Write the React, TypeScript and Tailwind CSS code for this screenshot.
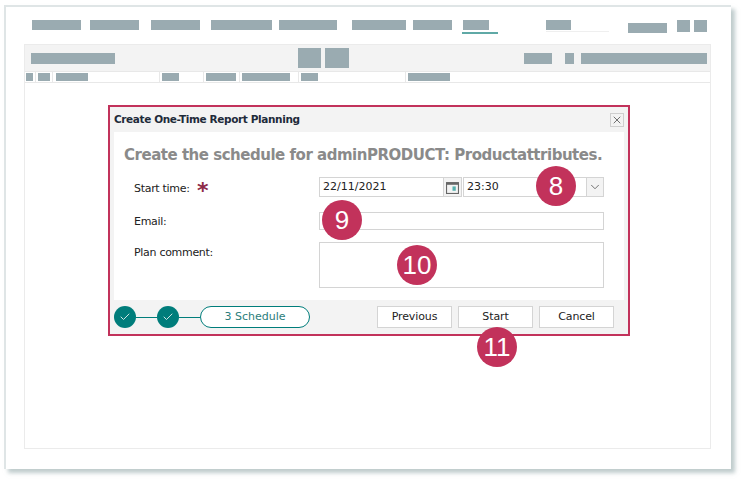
import React from 'react'
import { Check, ChevronDown, X } from 'lucide-react'

const Bar = ({ className }: { className: string }) => <div className={`bg-[#9aabb1] shrink-0 ${className}`} />

const Badge = ({ label, className }: { label: string; className: string }) => (
  <div className={`absolute w-10 h-10 rounded-full bg-[#c2325b] text-white flex items-center justify-center font-['Liberation_Sans',sans-serif] text-[26px] ${className}`}>
    {label}
  </div>
)

const Step = () => (
  <div className="w-[22px] h-[22px] rounded-full bg-[#007d7b] flex items-center justify-center shrink-0">
    <Check className="w-3 h-3 text-[#cfe5e4]" strokeWidth={2} />
  </div>
)

const FooterButton = ({ label }: { label: string }) => (
  <button className="w-[75px] h-[22px] bg-white border border-[#d4d4d4] text-[11px] tracking-[-0.1px] text-[#222] flex items-center justify-center">
    {label}
  </button>
)

export default function App() {
  return (
    <div className="relative w-[741px] h-[479px] overflow-hidden bg-white pt-[5px] pl-[4px] font-['DejaVu_Sans',sans-serif]">
      <div className="w-[727px] h-[464px] bg-white px-[18px] border-t-2 border-l-2 border-[#dfe5e6] shadow-[4px_4px_4px_rgba(150,170,172,0.6)]">
        {/* top nav */}
        <div className="flex h-[37px] pl-[8px] pt-[13px]">
          <Bar className="w-[49px] h-[10px]" />
          <Bar className="w-[49px] h-[10px] ml-[9px]" />
          <Bar className="w-[49px] h-[10px] ml-[12px]" />
          <Bar className="w-[61px] h-[10px] ml-[11px]" />
          <Bar className="w-[58px] h-[10px] ml-[7px]" />
          <Bar className="w-[54px] h-[10px] ml-[15px]" />
          <Bar className="w-[39px] h-[10px] ml-[7px]" />
          <div className="w-[36px] h-[14px] ml-[10px] pl-[1px] border-b-2 border-[#5fa9a6]">
            <Bar className="w-[26px] h-[10px]" />
          </div>
          <div className="w-[63px] h-[12px] ml-[48px] border-b border-[#efefef]">
            <Bar className="w-[25px] h-[10px]" />
          </div>
          <Bar className="w-[39px] h-[10px] ml-[19px] mt-[3px]" />
          <Bar className="w-[13px] h-[12px] ml-[10px]" />
          <Bar className="w-[13px] h-[12px] ml-[4px]" />
        </div>

        {/* panel */}
        <div className="w-[687px] h-[405px] border border-[#ebebeb]">
          <div className="flex items-center h-[27px] bg-[#f3f3f3] pl-[6px] border-b border-[#e8e8e8]">
            <Bar className="w-[84px] h-[11px]" />
            <Bar className="w-[23px] h-[20px] ml-[183px]" />
            <Bar className="w-[24px] h-[20px] ml-[4px]" />
            <Bar className="w-[28px] h-[11px] ml-[175px]" />
            <Bar className="w-[9px] h-[11px] ml-[13px]" />
            <Bar className="w-[126px] h-[11px] ml-[7px]" />
          </div>
          <div className="flex h-[11px] border-b border-[#e8e8e8] items-stretch">
            <div className="w-[11px] border-r border-[#e8e8e8] pl-[1px] pt-[1px]"><Bar className="w-[7px] h-[8px]" /></div>
            <div className="w-[17px] border-r border-[#e8e8e8] pl-[2px] pt-[1px]"><Bar className="w-[12px] h-[8px]" /></div>
            <div className="w-[107px] border-r border-[#e8e8e8] pl-[3px] pt-[1px]"><Bar className="w-[32px] h-[8px]" /></div>
            <div className="w-[44px] border-r border-[#e8e8e8] pl-[2px] pt-[1px]"><Bar className="w-[17px] h-[8px]" /></div>
            <div className="w-[36px] border-r border-[#e8e8e8] pl-[2px] pt-[1px]"><Bar className="w-[30px] h-[8px]" /></div>
            <div className="w-[59px] border-r border-[#e8e8e8] pl-[2px] pt-[1px]"><Bar className="w-[48px] h-[8px]" /></div>
            <div className="w-[107px] border-r border-[#e8e8e8] pl-[2px] pt-[1px]"><Bar className="w-[17px] h-[8px]" /></div>
            <div className="pl-[2px] pt-[1px]"><Bar className="w-[42px] h-[8px]" /></div>
          </div>

          {/* dialog */}
          <div className="w-[522px] h-[231px] ml-[83px] mt-[22px] border-2 border-[#c2325b] bg-[#f3f3f3] flex flex-col">
            <div className="h-[25px] flex items-center justify-between pl-[4px] pr-[4px] shrink-0">
              <span className="text-[10.5px] font-bold text-[#1e2b3a] tracking-[-0.38px] whitespace-nowrap">Create One-Time Report Planning</span>
              <div className="w-[14px] h-[14px] border border-[#cfcfcf] flex items-center justify-center">
                <X className="w-3 h-3 text-[#444]" strokeWidth={1.5} />
              </div>
            </div>
            <div className="mx-[4px] h-[168px] bg-white pl-[10px] pt-[12px] shrink-0">
              <div className="font-bold text-[15px] leading-[22px] text-[#8a8a8a] tracking-[-0.48px] whitespace-nowrap">
                Create the schedule for adminPRODUCT: Productattributes.
              </div>
              <div className="mt-[11px] flex items-center h-[20px]">
                <span className="w-[63px] ml-[10px] text-[11px] text-[#222] tracking-[-0.3px] pt-[4px]">Start time:</span>
                <span className="w-[122px] text-[22px] leading-[20px] font-bold text-[#8d2a47] pt-[7px]">*</span>
                <div className="w-[125px] h-[20px] border border-[#d4d4d4] text-[11px] text-[#222] pl-[3px] flex items-center">22/11/2021</div>
                <div className="w-[18px] h-[20px] border-y border-r border-[#d4d4d4] bg-[#f3f3f3] flex items-center justify-center">
                  <svg viewBox="0 0 12 12" className="w-[13px] h-[13px]">
                    <rect x="0.5" y="1.5" width="11" height="10" fill="none" stroke="#666" />
                    <rect x="0.5" y="1.5" width="11" height="2" fill="#666" />
                    <rect x="6" y="5" width="3" height="4" fill="#55b0ad" />
                  </svg>
                </div>
                <div className="w-[123px] h-[20px] ml-[1px] border-y border-l border-[#d4d4d4] text-[11px] text-[#222] pl-[3px] flex items-center">23:30</div>
                <div className="w-[18px] h-[20px] border border-[#d4d4d4] bg-[#f3f3f3] flex items-center justify-center">
                  <ChevronDown className="w-[14px] h-[14px] text-[#444]" strokeWidth={1.25} />
                </div>
              </div>
              <div className="mt-[15px] flex items-center h-[18px]">
                <span className="w-[185px] ml-[10px] text-[11px] text-[#222] tracking-[-0.3px] pt-[3px]">Email:</span>
                <div className="w-[285px] h-[18px] border border-[#d4d4d4]" />
              </div>
              <div className="mt-[12px] flex items-start">
                <span className="w-[185px] ml-[10px] text-[11px] leading-[20px] text-[#222] tracking-[-0.3px] pt-[1px]">Plan comment:</span>
                <div className="w-[285px] h-[46px] border border-[#d4d4d4]" />
              </div>
            </div>
            <div className="flex-1 flex items-center pl-[4px] pr-[14px]">
              <Step />
              <div className="w-[21px] h-px bg-[#007d7b]" />
              <Step />
              <div className="w-[21px] h-px bg-[#007d7b]" />
              <div className="w-[110px] h-[22px] rounded-full border border-[#007d7b] bg-white text-[11px] text-[#2b7d7b] flex items-center justify-center">3 Schedule</div>
              <div className="ml-auto flex gap-[6px]">
                <FooterButton label="Previous" />
                <FooterButton label="Start" />
                <FooterButton label="Cancel" />
              </div>
            </div>
          </div>
        </div>
      </div>

      <Badge label="8" className="left-[536px] top-[166px]" />
      <Badge label="9" className="left-[322px] top-[200px]" />
      <Badge label="10" className="left-[397px] top-[245px]" />
      <Badge label="11" className="left-[477px] top-[327px]" />
    </div>
  )
}
